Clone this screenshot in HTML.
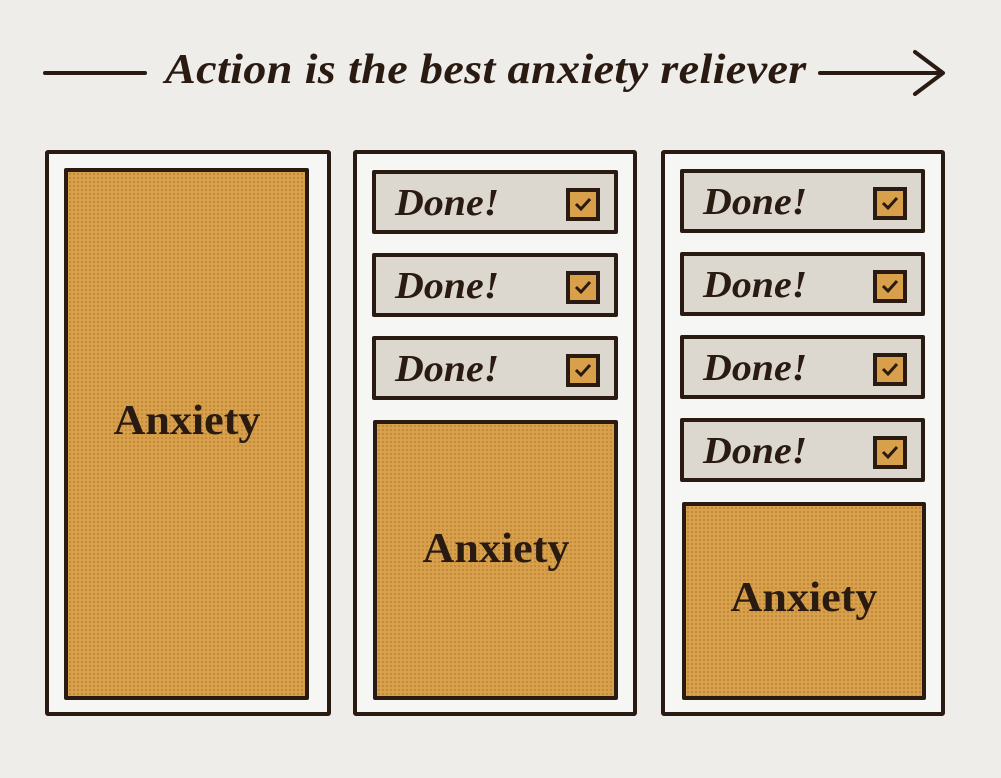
<!DOCTYPE html>
<html><head><style>
body{margin:0;width:1001px;height:778px;background:#eeedea;position:relative;overflow:hidden;font-family:"Liberation Serif",serif;color:#2a1b12}
.t{position:absolute;left:165px;top:46px;font-size:42px;font-weight:bold;font-style:italic;white-space:nowrap;letter-spacing:0.3px;transform:scaleX(1.1);transform-origin:0 0}
.line{position:absolute;height:4px;background:#2a1b12;border-radius:2px}
.p{position:absolute;top:150px;height:566px;border:4px solid #2a1b12;background:#f6f6f5;border-radius:3px;box-sizing:border-box}
.a{position:absolute;border:4px solid #2a1b12;background-color:#d8a04a;background-image:radial-gradient(circle,rgba(150,95,30,.35) 1px,transparent 1.3px);background-size:4px 4px;box-sizing:border-box;border-radius:2px;display:flex;align-items:center;justify-content:center;font-size:42px;font-weight:bold}
.a span{display:inline-block;transform:scaleX(1.05)}
.d{position:absolute;height:64px;border:4px solid #2a1b12;background:#dcd7cf;box-sizing:border-box;border-radius:2px;font-size:38px;font-style:italic;font-weight:bold}
.d span{position:absolute;left:19px;top:7px;transform:scaleX(1.05);transform-origin:0 0}
.c{position:absolute;right:14px;top:14px;width:34px;height:33px;border:4px solid #2a1b12;background:#d8a04a;box-sizing:border-box}
.c svg{position:absolute;left:3px;top:3px}
</style></head><body>
<div class="line" style="left:43px;top:71px;width:104px"></div>
<div class="t">Action is the best anxiety reliever</div>
<div class="line" style="left:818px;top:71px;width:124px"></div>
<svg style="position:absolute;left:900px;top:45px" width="50" height="56"><path d="M15 7 L43 28 L15 49" fill="none" stroke="#2a1b12" stroke-width="4" stroke-linecap="round" stroke-linejoin="round"/></svg>

<div class="p" style="left:45px;width:286px"></div>
<div class="a" style="left:64px;top:168px;width:245px;height:532px;padding-bottom:26px"><span>Anxiety</span></div>

<div class="p" style="left:353px;width:284px"></div>
<div class="d" style="left:372px;top:170px;width:246px"><span>Done!</span><div class="c"><svg width="20" height="19"><path d="M3 9 L8 14 L17 4" fill="none" stroke="#2a1b12" stroke-width="3"/></svg></div></div>
<div class="d" style="left:372px;top:253px;width:246px"><span>Done!</span><div class="c"><svg width="20" height="19"><path d="M3 9 L8 14 L17 4" fill="none" stroke="#2a1b12" stroke-width="3"/></svg></div></div>
<div class="d" style="left:372px;top:336px;width:246px"><span>Done!</span><div class="c"><svg width="20" height="19"><path d="M3 9 L8 14 L17 4" fill="none" stroke="#2a1b12" stroke-width="3"/></svg></div></div>
<div class="a" style="left:373px;top:420px;width:245px;height:280px;padding-bottom:22px"><span>Anxiety</span></div>

<div class="p" style="left:661px;width:284px"></div>
<div class="d" style="left:680px;top:169px;width:245px"><span>Done!</span><div class="c"><svg width="20" height="19"><path d="M3 9 L8 14 L17 4" fill="none" stroke="#2a1b12" stroke-width="3"/></svg></div></div>
<div class="d" style="left:680px;top:252px;width:245px"><span>Done!</span><div class="c"><svg width="20" height="19"><path d="M3 9 L8 14 L17 4" fill="none" stroke="#2a1b12" stroke-width="3"/></svg></div></div>
<div class="d" style="left:680px;top:335px;width:245px"><span>Done!</span><div class="c"><svg width="20" height="19"><path d="M3 9 L8 14 L17 4" fill="none" stroke="#2a1b12" stroke-width="3"/></svg></div></div>
<div class="d" style="left:680px;top:418px;width:245px"><span>Done!</span><div class="c"><svg width="20" height="19"><path d="M3 9 L8 14 L17 4" fill="none" stroke="#2a1b12" stroke-width="3"/></svg></div></div>
<div class="a" style="left:682px;top:502px;width:244px;height:198px;padding-bottom:6px"><span>Anxiety</span></div>
</body></html>
